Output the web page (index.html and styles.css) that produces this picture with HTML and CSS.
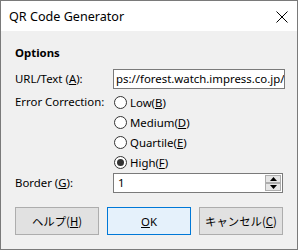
FILE: index.html
```html
<!DOCTYPE html>
<html>
<head>
<meta charset="utf-8">
<link rel="stylesheet" href="styles.css">
</head>
<body>
<div class="window">
  <div class="titlebar">
    <span class="title">QR Code Generator</span>
    <svg class="close" width="12" height="12" viewBox="0 0 12 12"><path d="M0.5 0.5 L11.5 11.5 M11.5 0.5 L0.5 11.5" stroke="#000" stroke-width="1" fill="none"/></svg>
  </div>
  <div class="content">
    <div class="section">Options</div>
    <div class="form">
      <label class="lbl">URL/Text (<u>A</u>):</label>
      <div class="textbox url">ps://forest.watch.impress.co.jp/</div>

      <label class="lbl lbl-top">Error Correction:</label>
      <div class="radios">
        <div class="radio"><span class="dot"></span>Low(<u>B</u>)</div>
        <div class="radio"><span class="dot"></span>Medium(<u>D</u>)</div>
        <div class="radio"><span class="dot"></span>Quartile(<u>E</u>)</div>
        <div class="radio checked"><span class="dot"></span>High(<u>F</u>)</div>
      </div>

      <label class="lbl">Border (<u>G</u>):</label>
      <div class="textbox spin">
        <span>1</span>
        <div class="spinbtns">
          <div class="sb"><svg width="7" height="4" viewBox="0 0 7 4"><path d="M3.5 0 L7 4 L0 4 Z" fill="#000"/></svg></div>
          <div class="sb"><svg width="7" height="4" viewBox="0 0 7 4"><path d="M0 0 L7 0 L3.5 4 Z" fill="#000"/></svg></div>
        </div>
      </div>
    </div>
    <div class="buttons">
      <button class="btn jp">ヘルプ(<u>H</u>)</button>
      <button class="btn default"><u>O</u>K</button>
      <button class="btn jp">キャンセル(<u>C</u>)</button>
    </div>
  </div>
</div>
</body>
</html>
```
FILE: styles.css
```css
html, body {
  margin: 0;
  padding: 0;
}
body {
  width: 298px;
  height: 250px;
  font-family: "Noto Sans", "Noto Sans CJK JP", sans-serif;
  font-size: 11.4px;
  color: #000;
}
.window {
  box-sizing: border-box;
  width: 298px;
  height: 250px;
  border: 1px solid #7a7a7a;
  display: flex;
  flex-direction: column;
  background: #f0f0f0;
}
.titlebar {
  height: 30px;
  background: #fff;
  display: flex;
  align-items: center;
  justify-content: space-between;
  padding: 0 9px 0 8px;
}
.title {
  font-size: 12.6px;
}
.close {
  margin-top: 1px;
}
.content {
  flex: 1;
  padding: 13px 12px 0 14px;
  display: flex;
  flex-direction: column;
}
.section {
  font-weight: bold;
  line-height: 17px;
  height: 17px;
}
.form {
  margin-top: 8px;
  display: grid;
  grid-template-columns: 98px 1fr;
  align-items: center;
}
.lbl {
  line-height: 20px;
}
.lbl-top {
  align-self: start;
  margin-top: 3px;
}
.textbox {
  box-sizing: border-box;
  height: 20px;
  border: 1px solid #7a7a7a;
  background: #fff;
  padding: 0 3px 0 2px;
  line-height: 18px;
  white-space: nowrap;
  overflow: hidden;
}
.radios {
  margin-top: 3px;
  display: flex;
  flex-direction: column;
}
.radio {
  height: 20px;
  display: flex;
  align-items: center;
  margin-left: 1px;
}
.dot {
  box-sizing: border-box;
  width: 13px;
  height: 13px;
  border: 1px solid #333;
  border-radius: 50%;
  background: #fff;
  margin-right: 3px;
  display: flex;
  align-items: center;
  justify-content: center;
}
.checked .dot::after {
  content: "";
  width: 7px;
  height: 7px;
  border-radius: 50%;
  background: #333;
}
.spin {
  margin-top: 1px;
  margin-right: 2px;
  display: flex;
  align-items: center;
  justify-content: space-between;
  padding: 0 1px 0 4px;
}
.spinbtns {
  display: flex;
  flex-direction: column;
}
.sb {
  box-sizing: border-box;
  width: 16px;
  height: 8px;
  border: 1px solid #adadad;
  background: #e6e6e6;
  display: flex;
  align-items: center;
  justify-content: center;
}
.buttons {
  margin-top: 14px;
  display: flex;
  gap: 8px;
  padding-right: 2px;
}
.btn {
  flex: 1;
  height: 28px;
  box-sizing: border-box;
  border: 1px solid #adadad;
  background: #e1e1e1;
  font-family: "Noto Sans", "Noto Sans CJK JP", sans-serif;
  font-size: 11.4px;
  color: #000;
  padding: 0;
}
.btn.jp {
  font-family: "Noto Sans CJK JP", sans-serif;
  font-size: 11.4px;
}
.btn.default {
  border-color: #0078d7;
  background: #e5f1fb;
}
```
